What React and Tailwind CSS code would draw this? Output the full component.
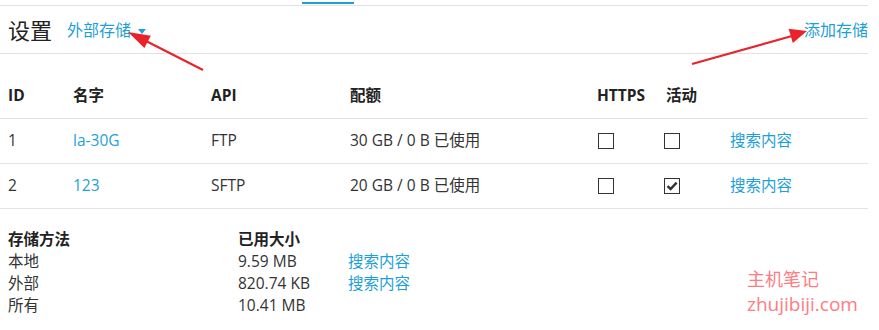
import React from 'react';

const font = { fontFamily: '"Open Sans", "Noto Sans CJK SC", sans-serif' };

const rows = [
  { id: 1, name: 'la-30G', api: 'FTP', quota: '30 GB / 0 B 已使用', https: false, active: false },
  { id: 2, name: '123', api: 'SFTP', quota: '20 GB / 0 B 已使用', https: false, active: true },
];

const usage = [
  { label: '本地', size: '9.59 MB', link: true },
  { label: '外部', size: '820.74 KB', link: true },
  { label: '所有', size: '10.41 MB', link: false },
];

function Box({ checked }) {
  return (
    <div className="ml-[-2px] flex h-4 w-4 items-center justify-center border border-[#333] bg-white">
      {checked && (
        <svg width="12" height="12" viewBox="0 0 12 12">
          <path d="M1.5 6.2 L4.6 9 L10.6 2.6" fill="none" stroke="#333" strokeWidth="2.4" />
        </svg>
      )}
    </div>
  );
}

const cols = 'grid grid-cols-[65px_138px_139px_247px_69px_64px_1fr] items-center pl-2';

export default function App() {
  return (
    <div className="relative h-[330px] w-[879px] overflow-hidden bg-white text-[15.5px] text-[#333]" style={font}>
      <div className="w-[868px]">
        <div className="h-[4px] border-b border-[#e2e2e2]">
          <div className="ml-[302px] mt-[2px] h-[2px] w-[52px] bg-[#1aa0d4]" />
        </div>

        <div className="flex h-[48px] items-center justify-between border-b border-[#e2e2e2] pl-2 pt-[1px]">
          <div className="flex items-center">
            <span className="text-[22px] text-[#222]">设置</span>
            <span className="ml-[15px] text-[16px] text-[#1d9fd8]">外部存储</span>
            <span className="ml-[7px] mt-[3px] h-0 w-0 border-x-[4px] border-t-[5px] border-x-transparent border-t-[#1d9fd8]" />
          </div>
          <span className="text-[16px] text-[#1d9fd8]">添加存储</span>
        </div>

        <div className={`${cols} mt-[20px] h-[45px] border-b border-[#e2e2e2] font-bold text-[#222]`}>
          <span>ID</span>
          <span>名字</span>
          <span>API</span>
          <span>配额</span>
          <span>HTTPS</span>
          <span>活动</span>
          <span />
        </div>

        {rows.map((r) => (
          <div key={r.id} className={`${cols} h-[45px] border-b border-[#e2e2e2]`}>
            <span>{r.id}</span>
            <span className="text-[#1d9fd8]">{r.name}</span>
            <span>{r.api}</span>
            <span>{r.quota}</span>
            <span className="pl-[3px]"><Box checked={r.https} /></span>
            <span><Box checked={r.active} /></span>
            <span className="text-[#1d9fd8]">搜索内容</span>
          </div>
        ))}

        <div className="mt-[19px] grid grid-cols-[230px_110px_1fr] pl-2 leading-[22px]">
          <span className="font-bold text-[#222]">存储方法</span>
          <span className="font-bold text-[#222]">已用大小</span>
          <span />
          {usage.map((u) => (
            <React.Fragment key={u.label}>
              <span>{u.label}</span>
              <span>{u.size}</span>
              <span className="text-[#1d9fd8]">{u.link ? '搜索内容' : ''}</span>
            </React.Fragment>
          ))}
        </div>
      </div>

      <div className="absolute left-[747px] top-[267px] flex flex-col text-[18px] leading-[25px] text-[#ff7b82]">
        <span>主机笔记</span>
        <span className="text-[19px]">zhujibiji.com</span>
      </div>

      <svg className="pointer-events-none absolute left-0 top-0" width="879" height="330">
        <line x1="203" y1="70" x2="146" y2="41" stroke="#e8232a" strokeWidth="2.2" />
        <polygon points="128,32 150.8,35.7 144.4,48.1" fill="#e8232a" />
        <line x1="692" y1="64" x2="792" y2="36" stroke="#e8232a" strokeWidth="2.2" />
        <polygon points="807,31 792.8,43.1 788.6,28.7" fill="#e8232a" />
      </svg>
    </div>
  );
}
